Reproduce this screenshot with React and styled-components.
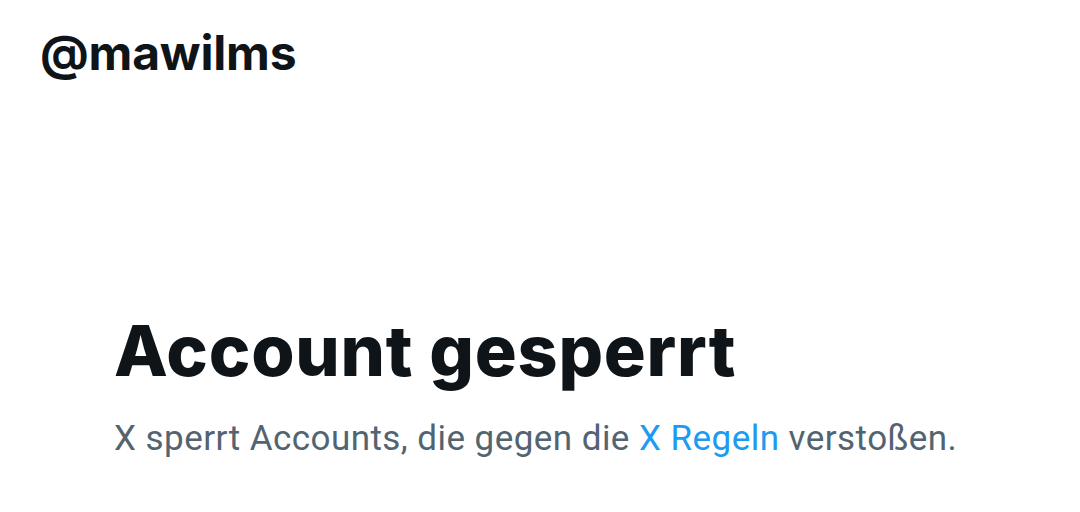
import React from "react";
import styled, { createGlobalStyle } from "styled-components";

const GlobalStyle = createGlobalStyle`
  html, body {
    margin: 0;
    padding: 0;
    background: #ffffff;
  }
  body {
    font-family: "Inter", "Roboto", sans-serif;
    color: #0f1419;
  }
`;

const Page = styled.div`
  width: 1080px;
  height: 512px;
  display: flex;
  flex-direction: column;
  box-sizing: border-box;
  padding: 25px 0 0 40px;
  overflow: hidden;
`;

const Handle = styled.div`
  font-family: "Inter", sans-serif;
  font-weight: 700;
  font-size: 48px;
  line-height: 56px;
  letter-spacing: -0.2px;
`;

const Notice = styled.section`
  display: flex;
  flex-direction: column;
  margin: 228px 0 0 74px;
`;

const Title = styled.h1`
  margin: 0;
  font-family: "Inter", sans-serif;
  font-weight: 800;
  font-size: 70px;
  line-height: 84px;
  letter-spacing: 0.75px;
`;

const Text = styled.p`
  margin: 24px 0 0;
  font-family: "Roboto", sans-serif;
  font-size: 35px;
  line-height: 44px;
  letter-spacing: 0.45px;
  color: #536471;
`;

const Link = styled.a`
  color: #1d9bf0;
  text-decoration: none;
`;

export default function App() {
  return (
    <>
      <GlobalStyle />
      <Page>
        <Handle>@mawilms</Handle>
        <Notice>
          <Title>Account gesperrt</Title>
          <Text>
            X sperrt Accounts, die gegen die <Link href="#">X Regeln</Link> verstoßen.
          </Text>
        </Notice>
      </Page>
    </>
  );
}
